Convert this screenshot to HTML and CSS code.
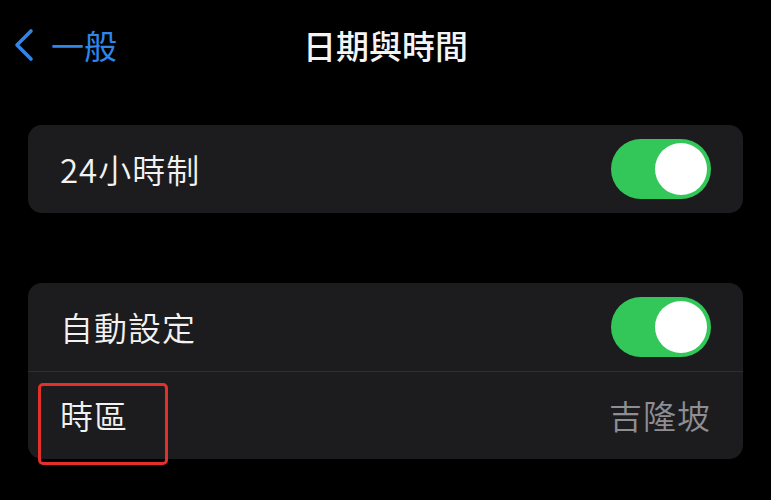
FILE: index.html
```html
<!DOCTYPE html>
<html lang="zh-Hant">
<head>
<meta charset="utf-8">
<link rel="stylesheet" href="styles.css">
</head>
<body>
<header class="nav">
  <div class="back">
    <svg class="chev" width="24" height="34" viewBox="0 0 24 34"><path d="M19 3 L5 17 L19 31" fill="none" stroke="#2f86e8" stroke-width="3.6" stroke-linecap="round" stroke-linejoin="round"/></svg>
    <span class="back-text">一般</span>
  </div>
  <h1 class="title">日期與時間</h1>
  <div></div>
</header>
<main class="content">
  <section class="card">
    <div class="row">
      <span class="label">24小時制</span>
      <span class="toggle"><span class="knob"></span></span>
    </div>
  </section>
  <section class="card card-annotated">
    <div class="row">
      <span class="label">自動設定</span>
      <span class="toggle"><span class="knob"></span></span>
    </div>
    <div class="row row-sep">
      <span class="label">時區</span>
      <span class="value">吉隆坡</span>
    </div>
    <div class="highlight"></div>
  </section>
</main>
</body>
</html>
```
FILE: styles.css
```css
* { box-sizing: border-box; }
html, body { margin: 0; padding: 0; }
body {
  background: #000;
  width: 771px;
  height: 500px;
  overflow: hidden;
  font-family: "Noto Sans CJK TC", "Noto Sans", sans-serif;
  color: #f2f2f2;
}
.nav {
  height: 90px;
  display: grid;
  grid-template-columns: 1fr auto 1fr;
  align-items: center;
  padding: 0 12px;
}
.back {
  display: flex;
  align-items: center;
  gap: 15px;
  color: #2f86e8;
}
.chev { display: block; }
.back-text {
  font-size: 33px;
  line-height: 1;
}
.title {
  margin: 0;
  font-size: 33px;
  font-weight: 500;
  line-height: 1;
  color: #f4f4f4;
}
.content {
  padding: 35px 28px 0;
  display: flex;
  flex-direction: column;
  gap: 70px;
}
.card {
  background: #1c1c1e;
  border-radius: 14px;
  position: relative;
}
.row {
  height: 88px;
  display: flex;
  align-items: center;
  justify-content: space-between;
  padding: 0 32px 0 32px;
}
.row-sep {
  border-top: 1px solid #2e2e31;
}
.label {
  font-size: 33px;
  line-height: 1;
  letter-spacing: 1px;
  font-weight: 350;
}
.value {
  font-size: 33px;
  line-height: 1;
  letter-spacing: 1px;
  font-weight: 350;
  color: #8e8e93;
}
.toggle {
  width: 100px;
  height: 60px;
  border-radius: 30px;
  background: #33c759;
  display: flex;
  align-items: center;
  justify-content: flex-end;
  padding-right: 4px;
}
.knob {
  width: 52px;
  height: 52px;
  border-radius: 50%;
  background: #fff;
}
.highlight {
  position: absolute;
  left: 10px;
  top: 100px;
  width: 130px;
  height: 82px;
  border: 3px solid #e3302b;
  border-radius: 5px;
}
```
